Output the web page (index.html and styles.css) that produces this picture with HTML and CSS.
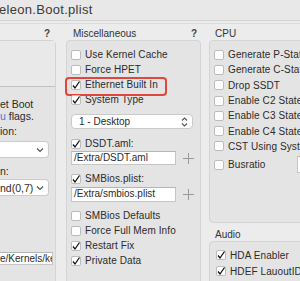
FILE: index.html
```html
<!DOCTYPE html>
<html>
<head>
<meta charset="utf-8">
<title>Chameleon.Boot.plist</title>
<link rel="stylesheet" href="styles.css">
</head>
<body>

<div class="titlebar">eleon.Boot.plist</div>

<div class="panes">

  <!-- left pane, cut by the window edge -->
  <div class="pane left">
    <div class="pane-head"><span></span><span class="help">?</span></div>
    <div class="box left-box">
      <div class="list"></div>
      <p class="note">et Boot<br><span class="blue">u</span> flags.</p>
      <p class="label">ion:</p>
      <div class="select"><span></span><svg width="8" height="6" viewBox="0 0 8 6"><polyline points="1,1.5 4,4.5 7,1.5" fill="none" stroke="#555" stroke-width="1.2"/></svg></div>
      <p class="label label2">n:</p>
      <div class="select select2"><span>nd(0,7)</span><svg width="8" height="6" viewBox="0 0 8 6"><polyline points="1,1.5 4,4.5 7,1.5" fill="none" stroke="#555" stroke-width="1.2"/></svg></div>
      <div class="field left-field">e/Kernels/kernel</div>
    </div>
  </div>

  <!-- Miscellaneous -->
  <div class="pane misc">
    <div class="pane-head"><span>Miscellaneous</span><span class="help">?</span></div>
    <div class="box misc-box">
      <div class="row"><span class="cb"></span>Use Kernel Cache</div>
      <div class="row"><span class="cb"></span>Force HPET</div>
      <div class="row marked"><span class="cb on"><svg width="10" height="10" viewBox="0 0 10 10"><polyline points="2,5.5 4,8 8.5,1.5" fill="none" stroke="#111" stroke-width="1.3"/></svg></span>Ethernet Built In</div>
      <div class="row"><span class="cb on"><svg width="10" height="10" viewBox="0 0 10 10"><polyline points="2,5.5 4,8 8.5,1.5" fill="none" stroke="#111" stroke-width="1.3"/></svg></span>System Type</div>
      <div class="popup"><span>1 - Desktop</span><svg width="7" height="10" viewBox="0 0 7 10"><polyline points="1,3.5 3.5,1 6,3.5" fill="none" stroke="#555" stroke-width="1.1"/><polyline points="1,6.5 3.5,9 6,6.5" fill="none" stroke="#555" stroke-width="1.1"/></svg></div>
      <div class="row gap-top"><span class="cb on"><svg width="10" height="10" viewBox="0 0 10 10"><polyline points="2,5.5 4,8 8.5,1.5" fill="none" stroke="#111" stroke-width="1.3"/></svg></span>DSDT.aml:</div>
      <div class="field-row"><div class="field">/Extra/DSDT.aml</div><svg class="plus" width="11" height="11" viewBox="0 0 11 11"><path d="M5.5 0v11M0 5.5h11" stroke="#9a9a9a" stroke-width="1"/></svg></div>
      <div class="row gap-top2"><span class="cb on"><svg width="10" height="10" viewBox="0 0 10 10"><polyline points="2,5.5 4,8 8.5,1.5" fill="none" stroke="#111" stroke-width="1.3"/></svg></span>SMBios.plist:</div>
      <div class="field-row fr2"><div class="field">/Extra/smbios.plist</div><svg class="plus" width="11" height="11" viewBox="0 0 11 11"><path d="M5.5 0v11M0 5.5h11" stroke="#9a9a9a" stroke-width="1"/></svg></div>
      <div class="row gap-top2"><span class="cb"></span>SMBios Defaults</div>
      <div class="row"><span class="cb"></span>Force Full Mem Info</div>
      <div class="row"><span class="cb on"><svg width="10" height="10" viewBox="0 0 10 10"><polyline points="2,5.5 4,8 8.5,1.5" fill="none" stroke="#111" stroke-width="1.3"/></svg></span>Restart Fix</div>
      <div class="row"><span class="cb on"><svg width="10" height="10" viewBox="0 0 10 10"><polyline points="2,5.5 4,8 8.5,1.5" fill="none" stroke="#111" stroke-width="1.3"/></svg></span>Private Data</div>
    </div>
  </div>

  <!-- CPU and Audio -->
  <div class="pane right">
    <div class="pane-head"><span>CPU</span></div>
    <div class="box cpu-box">
      <div class="row cpu-row"><span class="cb"></span>Generate P-States</div>
      <div class="row cpu-row"><span class="cb"></span>Generate C-States</div>
      <div class="row cpu-row"><span class="cb"></span>Drop SSDT</div>
      <div class="row cpu-row"><span class="cb"></span>Enable C2 State</div>
      <div class="row cpu-row"><span class="cb"></span>Enable C3 State</div>
      <div class="row cpu-row"><span class="cb"></span>Enable C4 State</div>
      <div class="row cpu-row"><span class="cb"></span>CST Using System</div>
      <div class="row bus-row"><span class="cb"></span>Busratio<div class="field bus-field"></div></div>
    </div>
    <div class="pane-head audio-head"><span>Audio</span></div>
    <div class="box audio-box">
      <div class="row audio-row"><span class="cb on"><svg width="10" height="10" viewBox="0 0 10 10"><polyline points="2,5.5 4,8 8.5,1.5" fill="none" stroke="#111" stroke-width="1.3"/></svg></span>HDA Enabler</div>
      <div class="row audio-row"><span class="cb on"><svg width="10" height="10" viewBox="0 0 10 10"><polyline points="2,5.5 4,8 8.5,1.5" fill="none" stroke="#111" stroke-width="1.3"/></svg></span>HDEF LauoutID</div>
    </div>
  </div>

</div>

</body>
</html>
```

FILE: styles.css
```css
* {
  box-sizing: border-box;
}
body {
  margin: 0;
  width: 300px;
  height: 281px;
  overflow: hidden;
  background: #ececec;
  font-family: "Liberation Sans", Arial, sans-serif;
  font-size: 10px;
  color: #2b2b2b;
}
p {
  margin: 0;
}

/* window title */
.titlebar {
  height: 21px;
  line-height: 20px;
  border-bottom: 1px solid #d2d2d2;
  background: #e8e8e8;
  font-size: 13px;
  letter-spacing: 0.3px;
  color: #3a3a3a;
  text-indent: -1px;
  white-space: nowrap;
}

.panes {
  display: flex;
  margin-top: 2px;
  border-top: 1px solid #dcdcdc;
  padding-top: 3px;
  height: 260px;
}
.pane {
  flex-shrink: 0;
}
.pane-head {
  height: 13px;
  display: flex;
  justify-content: space-between;
  align-items: center;
  padding: 0 4px 0 7px;
  font-size: 10px;
  color: #333;
}
.help {
  font-weight: bold;
  font-size: 10px;
  color: #444;
}
.box {
  background: #e4e4e4;
  border: 1px solid #d4d4d4;
  border-radius: 4px;
}

/* left pane */
.left {
  width: 62px;
  margin-left: -6px;
}
.left .pane-head {
  padding-right: 6px;
}
.left-box {
  height: 250px;
  padding: 0 6px 0 5px;
}
.list {
  height: 46px;
  margin: 0 -6px 0 -5px;
  background: #e9e9e9;
  border-bottom: 1px solid #c2c2c2;
}
.note {
  margin-top: 11px;
  line-height: 12px;
  font-size: 10.5px;
  white-space: nowrap;
}
.blue {
  color: #3a7bd5;
}
.label {
  margin-top: 3px;
  line-height: 12px;
  font-size: 10.5px;
}
.label2 {
  margin-top: 7px;
}
.select {
  margin-top: 4px;
  height: 17px;
  display: flex;
  justify-content: space-between;
  align-items: center;
  padding: 0 4px 0 0;
  background: #fff;
  border: 1px solid #cbcbcb;
  border-left: none;
  border-radius: 0 4px 4px 0;
  font-size: 10.5px;
  white-space: nowrap;
}
.select2 {
  margin-top: 2px;
}
.field {
  height: 14px;
  line-height: 12px;
  padding-left: 2px;
  background: #fff;
  border: 1px solid #c6c6c6;
  border-top-color: #b5b5b5;
  white-space: nowrap;
  overflow: hidden;
  font-size: 10.5px;
}
.left-field {
  margin-top: 56px;
  margin-right: -4px;
  height: 13px;
  padding-left: 0;
  border-left: none;
  font-size: 10px;
}

/* checkbox rows */
.row {
  display: flex;
  align-items: center;
  gap: 4px;
  height: 15px;
  white-space: nowrap;
  font-size: 10px;
  letter-spacing: 0.1px;
}
.cb {
  flex-shrink: 0;
  width: 10px;
  height: 10px;
  background: #fff;
  border: 1px solid #bcbcbc;
  border-radius: 2px;
  position: relative;
}
.cb svg {
  display: block;
  margin: -1px 0 0 -1px;
}

/* miscellaneous */
.misc {
  width: 135px;
  margin-left: 10px;
}
.misc-box {
  height: 250px;
  padding: 6px 4px 0 4px;
}
.marked {
  position: relative;
}
.marked::before {
  content: "";
  position: absolute;
  left: -6px;
  top: 0;
  width: 98px;
  height: 15px;
  border: 2px solid #e0463c;
  border-radius: 4px;
}
.popup {
  margin-top: 7px;
  width: 122px;
  height: 15px;
  display: flex;
  justify-content: space-between;
  align-items: center;
  padding: 0 4px 0 7px;
  background: #fff;
  border: 1px solid #cacaca;
  border-radius: 4px;
  font-size: 10px;
}
.gap-top {
  margin-top: 7px;
}
.gap-top2 {
  margin-top: 6px;
}
.field-row {
  display: flex;
  align-items: center;
  gap: 7px;
}
.field-row .field {
  width: 105px;
  font-size: 10px;
}
.fr2 {
  margin-top: 1px;
}
.fr2 .field {
  height: 15px;
}

/* cpu and audio */
.right {
  width: 100px;
  margin-left: 8px;
}
.right .pane-head {
  padding-left: 6px;
}
.cpu-box {
  height: 183px;
  padding: 6px 0 0 4px;
}
.cpu-row {
  height: 15.3px;
}
.bus-row {
  margin-top: 2px;
  height: 17px;
}
.bus-field {
  margin-left: 27px;
  width: 20px;
  height: 17px;
}
.audio-head {
  margin-top: 4px;
  height: 14px;
}
.audio-box {
  height: 50px;
  padding: 5px 0 0 6px;
}
.audio-row {
  height: 16px;
}
```
